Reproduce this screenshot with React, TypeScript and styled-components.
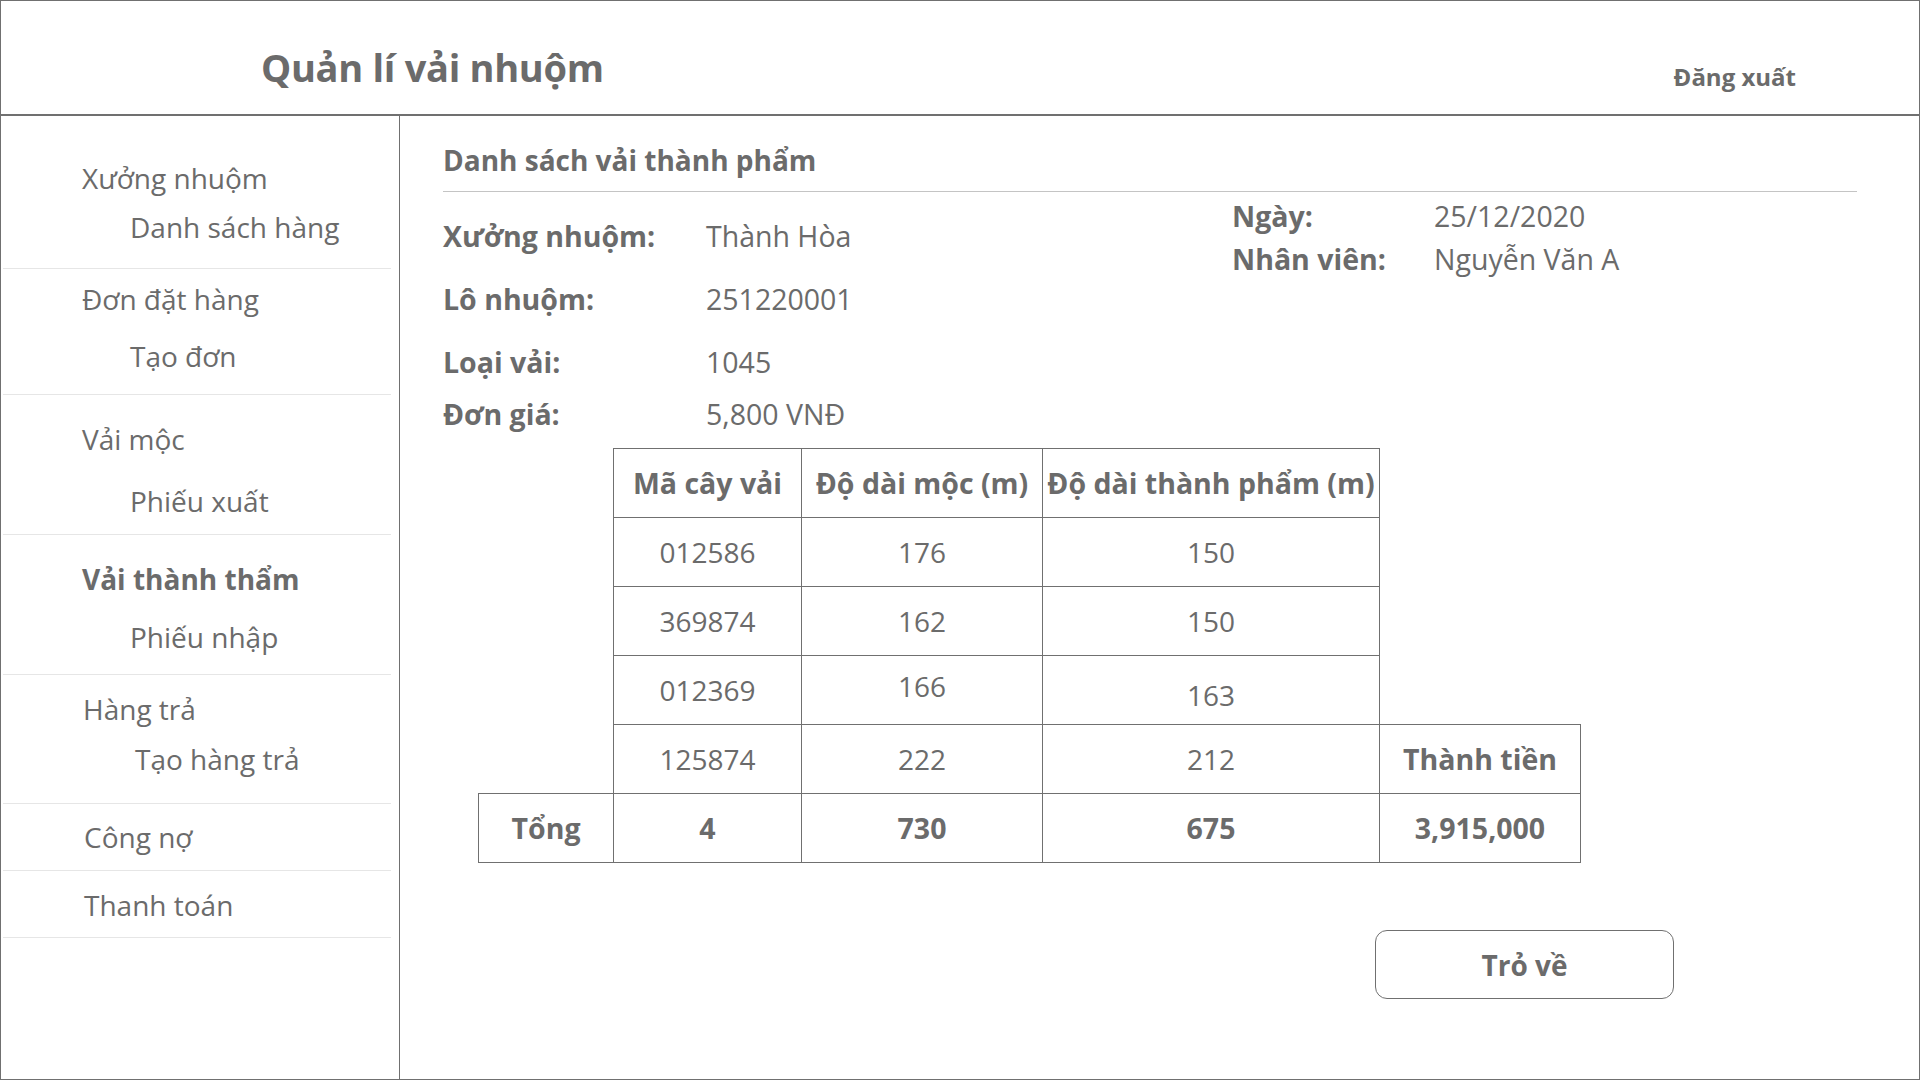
import React from "react";
import styled, { createGlobalStyle } from "styled-components";

const GlobalStyle = createGlobalStyle`
  html, body { margin: 0; padding: 0; background: #fff; }
  body { font-family: "Open Sans", "Noto Sans", sans-serif; color: #6b6b6b; }
  * { box-sizing: border-box; }
`;

const Frame = styled.div`
  width: 1920px;
  height: 1080px;
  border: 1px solid #707070;
  display: flex;
  flex-direction: column;
  overflow: hidden;
`;

const Header = styled.header`
  height: 115px;
  flex: none;
  border-bottom: 2px solid #707070;
  display: flex;
  align-items: flex-start;
  justify-content: space-between;
  padding: 0 123px 0 260px;
`;

const Title = styled.h1`
  margin: 44px 0 0;
  font-size: 38px;
  line-height: 44px;
  font-weight: 700;
  letter-spacing: -0.3px;
`;

const Logout = styled.a`
  margin-top: 61px;
  font-size: 24px;
  line-height: 30px;
  font-weight: 700;
  cursor: pointer;
`;

const Body = styled.div`
  flex: 1;
  display: flex;
  min-height: 0;
`;

const Sidebar = styled.nav`
  width: 399px;
  flex: none;
  border-right: 1px solid #707070;
`;

const NavGroup = styled.div<{ $pt: number; $pb: number; $gap: number }>`
  margin: 0 8px 0 2px;
  padding: ${(p) => p.$pt}px 0 ${(p) => p.$pb}px;
  border-bottom: 1px solid #e6e6e6;
  display: flex;
  flex-direction: column;
  gap: ${(p) => p.$gap}px;
`;

const NavItem = styled.div<{ $indent: number; $active?: boolean }>`
  padding-left: ${(p) => p.$indent}px;
  font-size: 28px;
  line-height: 40px;
  font-weight: ${(p) => (p.$active ? 700 : 400)};
  white-space: nowrap;
`;

const Main = styled.main`
  flex: 1;
  padding: 26px 62px 0 43px;
  display: flex;
  flex-direction: column;
`;

const Heading = styled.h2`
  margin: 0;
  font-size: 28px;
  line-height: 36px;
  font-weight: 700;
  padding-bottom: 13px;
  border-bottom: 1px solid #c4c4c4;
`;

const InfoRow = styled.div`
  display: flex;
`;

const InfoGrid = styled.div<{ $label: number; $rows: string; $top: number; $width?: number }>`
  display: grid;
  grid-template-columns: ${(p) => p.$label}px auto;
  grid-template-rows: ${(p) => p.$rows};
  margin-top: ${(p) => p.$top}px;
  width: ${(p) => (p.$width ? `${p.$width}px` : "auto")};
  font-size: 28.5px;
  line-height: 40px;
  white-space: nowrap;
`;

const Label = styled.span`
  font-weight: 700;
`;

const Value = styled.span`
  font-weight: 400;
`;

const Sheet = styled.table`
  margin: 14px 0 0 35px;
  border-collapse: collapse;
  table-layout: fixed;
  width: 1102px;
`;

const Col = styled.col<{ $w: number }>`
  width: ${(p) => p.$w}px;
`;

const Cell = styled.td<{ $bold?: boolean; $open?: boolean; $shift?: number }>`
  height: 69px;
  padding: ${(p) => (p.$shift && p.$shift > 0 ? p.$shift * 2 : 0)}px 0
    ${(p) => (p.$shift && p.$shift < 0 ? -p.$shift * 2 : 0)}px;
  text-align: center;
  vertical-align: middle;
  font-size: ${(p) => (p.$bold ? 28.5 : 28)}px;
  font-weight: ${(p) => (p.$bold ? 700 : 400)};
  white-space: nowrap;
  border: ${(p) => (p.$open ? "none" : "1px solid #707070")};
`;

const ButtonRow = styled.div`
  display: flex;
  justify-content: flex-end;
  padding-right: 183px;
  margin-top: 67px;
`;

const BackButton = styled.button`
  width: 299px;
  height: 69px;
  border: 1px solid #707070;
  border-radius: 12px;
  background: #fff;
  color: #6b6b6b;
  font-family: inherit;
  font-size: 28px;
  font-weight: 700;
  cursor: pointer;
`;

type NavEntry = {
  title: string;
  sub?: string;
  pt: number;
  gap: number;
  pb: number;
  indent?: number;
  subIndent?: number;
  active?: boolean;
};

const NAV: NavEntry[] = [
  { title: "Xưởng nhuộm", sub: "Danh sách hàng", pt: 42, gap: 9, pb: 21 },
  { title: "Đơn đặt hàng", sub: "Tạo đơn", pt: 10, gap: 17, pb: 18 },
  { title: "Vải mộc", sub: "Phiếu xuất", pt: 24, gap: 22, pb: 13 },
  { title: "Vải thành thẩm", sub: "Phiếu nhập", pt: 24, gap: 18, pb: 17, active: true },
  { title: "Hàng trả", sub: "Tạo hàng trả", pt: 14, gap: 10, pb: 24, indent: 80, subIndent: 132 },
  { title: "Công nợ", pt: 13, gap: 0, pb: 13, indent: 81 },
  { title: "Thanh toán", pt: 14, gap: 0, pb: 12, indent: 81 },
];

type Cells = { text: string; bold?: boolean; open?: boolean; shift?: number }[];

const ROWS: Cells[] = [
  [
    { text: "", open: true },
    { text: "Mã cây vải", bold: true },
    { text: "Độ dài mộc (m)", bold: true },
    { text: "Độ dài thành phẩm (m)", bold: true },
    { text: "", open: true },
  ],
  [{ text: "", open: true }, { text: "012586" }, { text: "176" }, { text: "150" }, { text: "", open: true }],
  [{ text: "", open: true }, { text: "369874" }, { text: "162" }, { text: "150" }, { text: "", open: true }],
  [
    { text: "", open: true },
    { text: "012369" },
    { text: "166", shift: -4 },
    { text: "163", shift: 5 },
    { text: "", open: true },
  ],
  [
    { text: "", open: true },
    { text: "125874" },
    { text: "222" },
    { text: "212" },
    { text: "Thành tiền", bold: true },
  ],
  [
    { text: "Tổng", bold: true },
    { text: "4", bold: true },
    { text: "730", bold: true },
    { text: "675", bold: true },
    { text: "3,915,000", bold: true },
  ],
];

const COLS = [135, 188, 241, 337, 201];

const App = () => {
  return (
    <>
      <GlobalStyle />
      <Frame>
        <Header>
          <Title>Quản lí vải nhuộm</Title>
          <Logout>Đăng xuất</Logout>
        </Header>
        <Body>
          <Sidebar>
            {NAV.map((g) => (
              <NavGroup key={g.title} $pt={g.pt} $pb={g.pb} $gap={g.gap}>
                <NavItem $indent={g.indent ?? 79} $active={g.active}>
                  {g.title}
                </NavItem>
                {g.sub && <NavItem $indent={g.subIndent ?? 127}>{g.sub}</NavItem>}
              </NavGroup>
            ))}
          </Sidebar>
          <Main>
            <Heading>Danh sách vải thành phẩm</Heading>
            <InfoRow>
              <InfoGrid $label={263} $rows="63px 63px 52px 40px" $top={24} $width={789}>
                <Label>Xưởng nhuộm:</Label>
                <Value>Thành Hòa</Value>
                <Label>Lô nhuộm:</Label>
                <Value>251220001</Value>
                <Label>Loại vải:</Label>
                <Value>1045</Value>
                <Label>Đơn giá:</Label>
                <Value>5,800 VNĐ</Value>
              </InfoGrid>
              <InfoGrid $label={202} $rows="43px 40px" $top={4}>
                <Label>Ngày:</Label>
                <Value>25/12/2020</Value>
                <Label>Nhân viên:</Label>
                <Value>Nguyễn Văn A</Value>
              </InfoGrid>
            </InfoRow>
            <Sheet>
              <colgroup>
                {COLS.map((w, i) => (
                  <Col key={i} $w={w} />
                ))}
              </colgroup>
              <tbody>
                {ROWS.map((row, r) => (
                  <tr key={r}>
                    {row.map((c, i) => (
                      <Cell key={i} $bold={c.bold} $open={c.open} $shift={c.shift}>
                        {c.text}
                      </Cell>
                    ))}
                  </tr>
                ))}
              </tbody>
            </Sheet>
            <ButtonRow>
              <BackButton>Trỏ về</BackButton>
            </ButtonRow>
          </Main>
        </Body>
      </Frame>
    </>
  );
};

export default App;
